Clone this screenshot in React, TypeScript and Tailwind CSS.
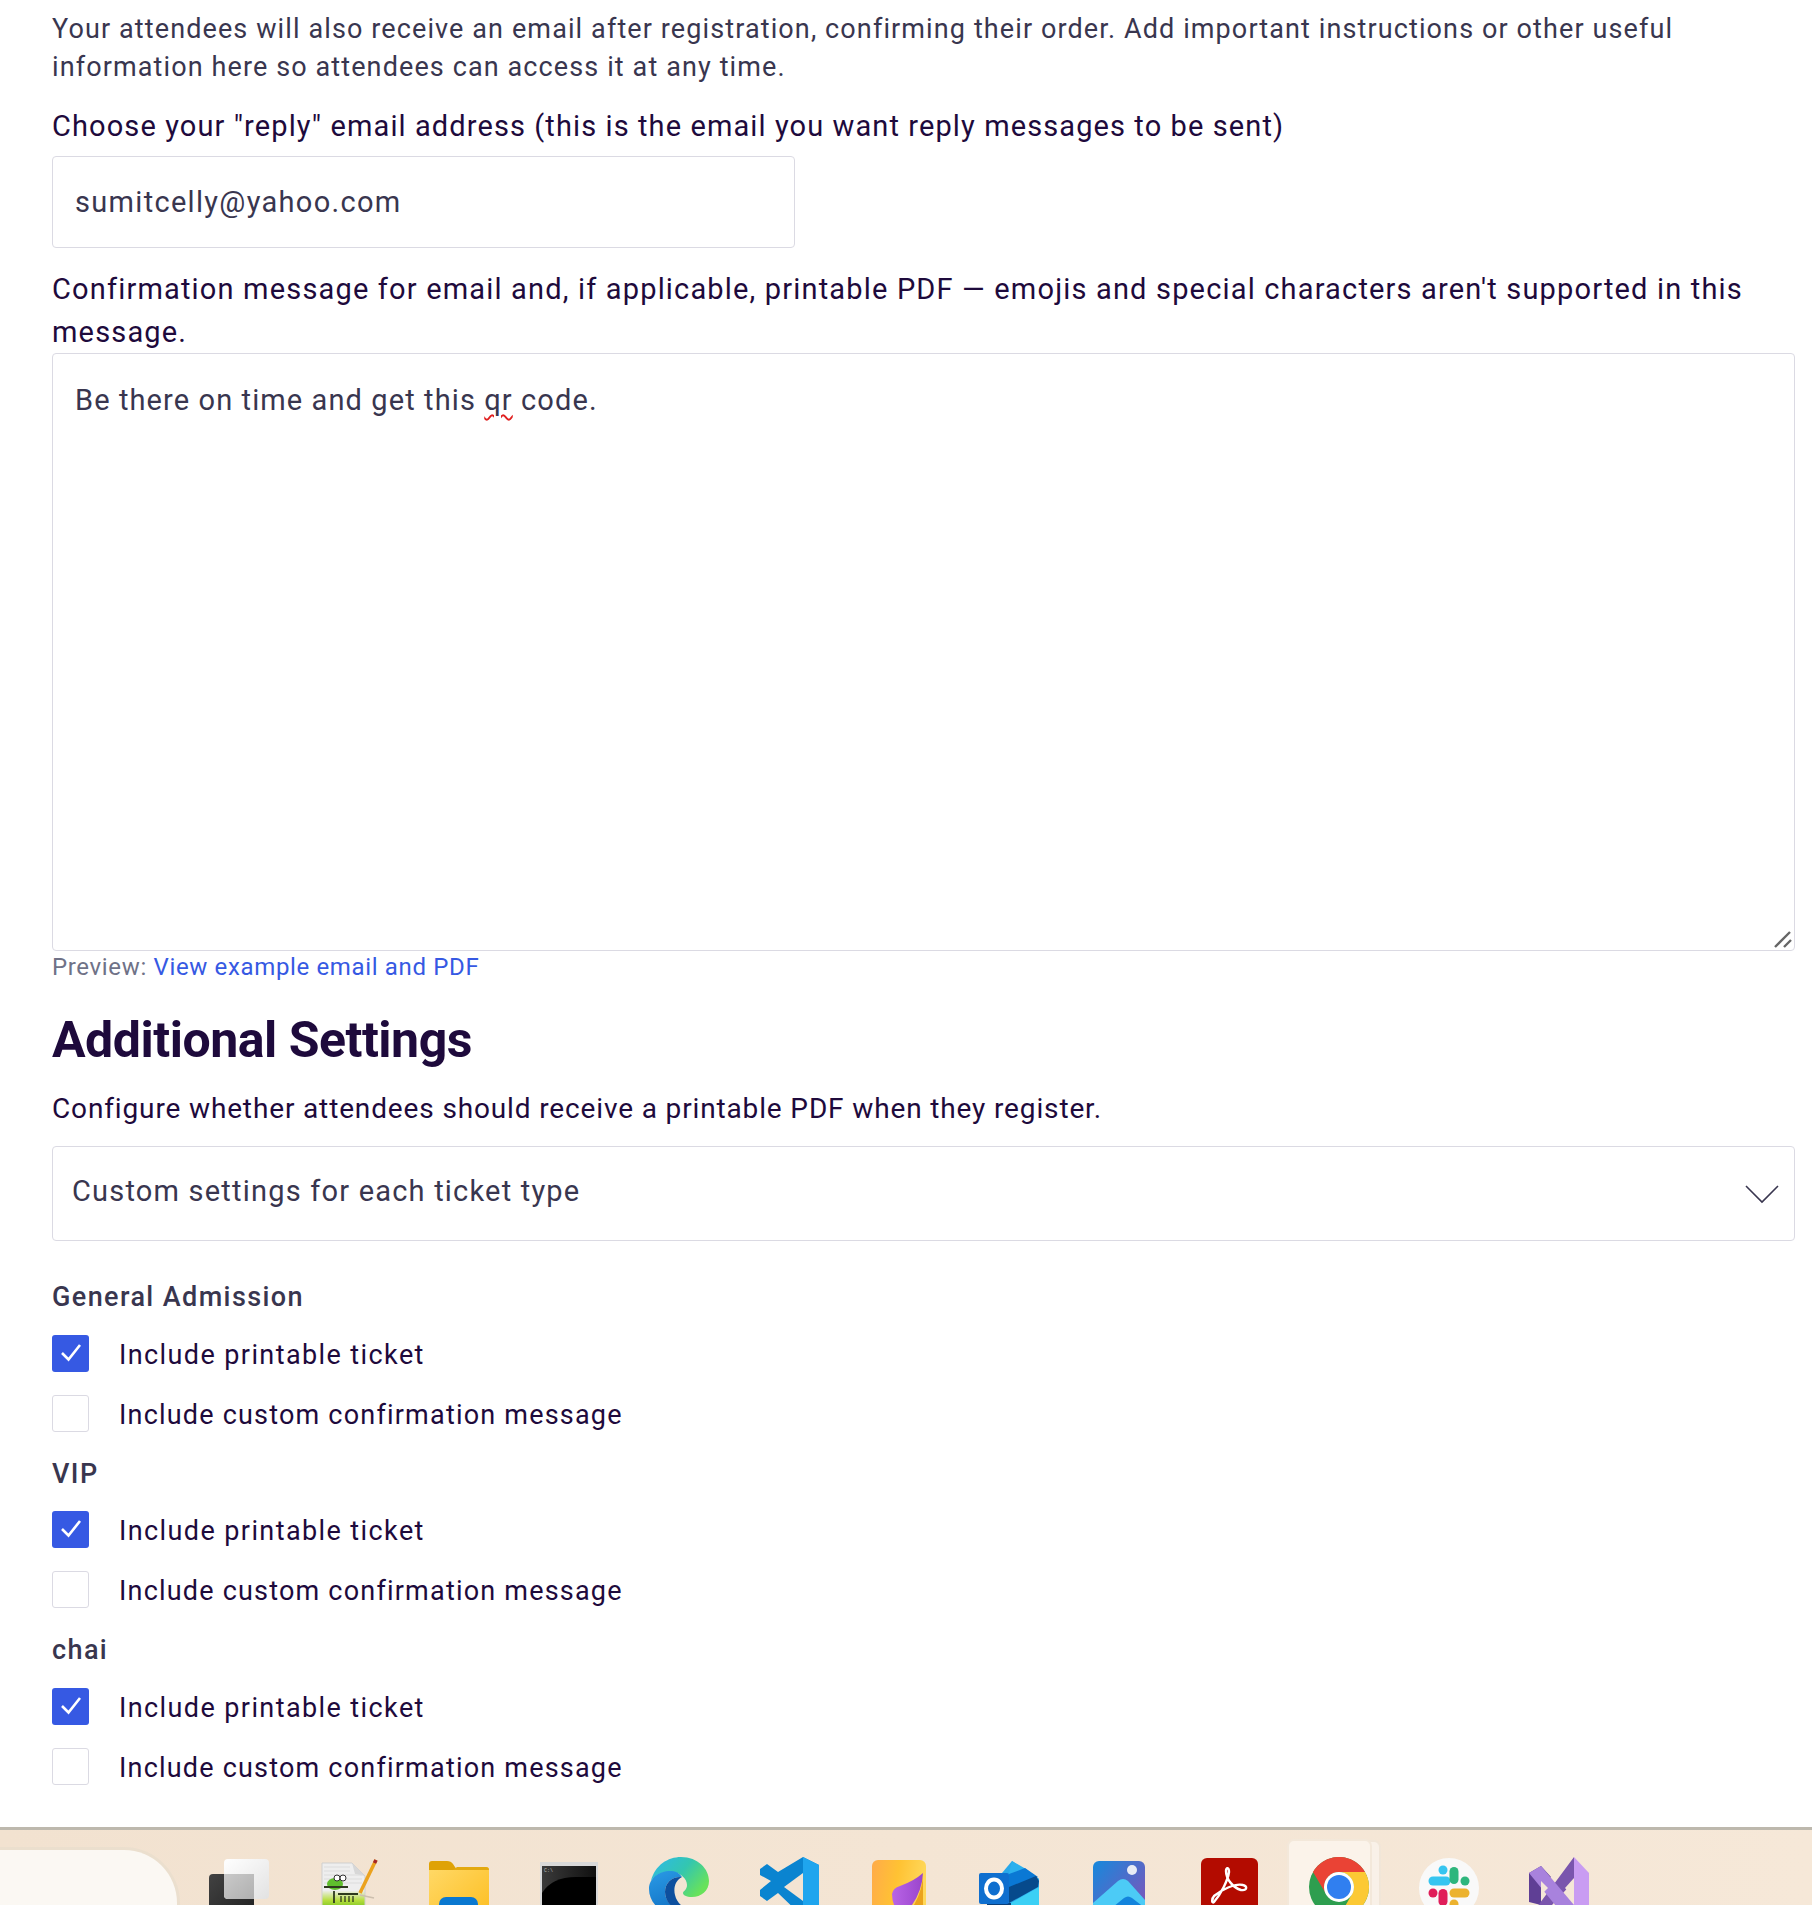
import React from "react";

const font = "font-['Roboto','Liberation_Sans',sans-serif]";

function Check({ on }: { on: boolean }) {
  return on ? (
    <span className="w-[37px] h-[37px] rounded-[3px] bg-[#3659e3] flex items-center justify-center shrink-0">
      <svg className="-mt-[3px]" width="24" height="24" viewBox="0 0 24 24" fill="none" stroke="#fff" strokeWidth="2.6">
        <path d="M3 13l6.500 6.500L21 5" />
      </svg>
    </span>
  ) : (
    <span className="w-[37px] h-[37px] rounded-[3px] border border-[#dbdae3] bg-white shrink-0" />
  );
}

function Row({ on, text }: { on: boolean; text: string }) {
  return (
    <div className={`h-[60px] flex items-start gap-[30px] text-[27px] leading-[40px] text-[#1e0a3c] ${on ? "tracking-[1.4px]" : "tracking-[1.2px]"}`}>
      <Check on={on} />
      <span>{text}</span>
    </div>
  );
}

function Group({ name }: { name: string }) {
  return (
    <section>
      <div className="h-[38px] leading-[38px] text-[27px] font-medium tracking-[1.4px] text-[#39364f] mb-[18.5px]">{name}</div>
      <Row on text="Include printable ticket" />
      <Row on={false} text="Include custom confirmation message" />
    </section>
  );
}

const Slot = ({ children, className = "" }: { children: React.ReactNode; className?: string }) => (
  <div className={`w-[110px] h-[75px] shrink-0 flex justify-center ${className}`}>{children}</div>
);

export default function App() {
  return (
    <div className={`h-[1905px] flex flex-col overflow-hidden bg-white ${font}`}>
      <main className="flex-1 min-h-0 pl-[52px] pr-[17px] pt-[10px]">
        <p className="text-[27px] leading-[38px] tracking-[1.11px] text-[#39364f]">
          Your attendees will also receive an email after registration, confirming their order. Add important instructions or other useful information here so attendees can access it at any time.
        </p>
        <label className="block mt-[21px] text-[29px] leading-[38px] tracking-[1.1px] text-[#1e0a3c]">
          Choose your "reply" email address (this is the email you want reply messages to be sent)
        </label>
        <div className="mt-[11px] w-[743px] h-[92px] border border-[#dbdae3] rounded-[4px] pl-[22px] pt-[2px] flex items-center text-[29px] tracking-[1.3px] text-[#39364f]">
          sumitcelly@yahoo.com
        </div>
        <label className="block mt-[20px] text-[29px] leading-[43px] tracking-[1.17px] text-[#1e0a3c]">
          Confirmation message for email and, if applicable, printable PDF — emojis and special characters aren't supported in this message.
        </label>
        <div className="relative -mt-[1px] h-[598px] border border-[#dbdae3] rounded-[4px] pl-[22px] pt-[25px] text-[29px] leading-[42px] tracking-[1.1px] text-[#39364f]">
          Be there on time and get this <span className="underline decoration-wavy decoration-[#e02020] decoration-[1.5px] underline-offset-4">qr</span> code.
          <svg className="absolute right-[1px] bottom-[1px]" width="20" height="20" viewBox="0 0 20 20" stroke="#666" strokeWidth="2.4" fill="none">
            <path d="M2 18L17 3M11 18l7-7" />
          </svg>
        </div>
        <p className="h-[32px] leading-[32px] text-[24px] tracking-[0.65px] text-[#6f7287]">
          Preview: <a className="text-[#3659e3]">View example email and PDF</a>
        </p>
        <h2 className="mt-[27px] h-[60px] leading-[60px] text-[50px] font-bold tracking-[-0.48px] text-[#1e0a3c]">Additional Settings</h2>
        <p className="mt-[20px] h-[38px] leading-[38px] text-[28px] tracking-[0.86px] text-[#1e0a3c]">
          Configure whether attendees should receive a printable PDF when they register.
        </p>
        <div className="mt-[18px] h-[95px] border border-[#dbdae3] rounded-[4px] pl-[19px] pr-[15px] flex items-center justify-between text-[29px] tracking-[1.2px] text-[#39364f]">
          <span className="-mt-[3px]">Custom settings for each ticket type</span>
          <svg width="34" height="20" viewBox="0 0 34 20" fill="none" stroke="#39364f" strokeWidth="1.6">
            <path d="M1 2l16 16L33 2" />
          </svg>
        </div>
        <div className="mt-[37px]">
          <Group name="General Admission" />
          <Group name="VIP" />
          <Group name="chai" />
        </div>
      </main>
      <footer className="h-[78px] shrink-0 overflow-hidden border-t-[3px] border-[#bdb8ad] bg-[linear-gradient(90deg,#f2e2d0,#f6e8d8)] flex items-start">
        <div className="mt-[17px] w-[180px] h-[70px] shrink-0 rounded-tr-[56px] bg-[#fbf8f3] border-[3px] border-l-0 border-[#ebdfce]" />
        <div className="ml-[4px] flex items-start">
          <Slot>
            <svg className="mt-[29px]" width="60" height="60" viewBox="0 0 60 60">
              <defs>
                <linearGradient id="tw" x1="0" y1="0" x2="1" y2="1">
                  <stop offset="0" stopColor="#ffffff" />
                  <stop offset="1" stopColor="#e2e2e2" />
                </linearGradient>
                <linearGradient id="tv" x1="0" y1="0" x2="1" y2="1">
                  <stop offset="0" stopColor="#c9c9c9" />
                  <stop offset="1" stopColor="#b0b0b0" />
                </linearGradient>
                <linearGradient id="td" x1="0" y1="0" x2="1" y2="1">
                  <stop offset="0" stopColor="#424242" />
                  <stop offset="1" stopColor="#1f1f1f" />
                </linearGradient>
              </defs>
              <rect x="0" y="15" width="45" height="45" rx="4" fill="url(#td)" />
              <rect x="15" y="0" width="45" height="40" rx="4" fill="url(#tw)" />
              <path d="M15 15h30v25H19q-4 0-4-4z" fill="url(#tv)" />
            </svg>
          </Slot>
          <Slot>
            <svg className="mt-[28px]" width="60" height="60" viewBox="0 0 60 60">
              <defs>
                <linearGradient id="np" x1="0" y1="0" x2="0" y2="1">
                  <stop offset="0.5" stopColor="#eeeeee" />
                  <stop offset="0.68" stopColor="#b5de3c" />
                  <stop offset="0.85" stopColor="#6fbe1e" />
                </linearGradient>
              </defs>
              <path d="M3 5h30l13 13v42H3z" fill="url(#np)" stroke="#cfcfcf" />
              <path d="M33 5l3 11 10 2z" fill="#d7d7d7" />
              <path d="M5 9h26M5 13h26M5 17h38M5 21h38M5 25h38" stroke="#dcdcdc" />
              <path d="M57 2L41 35" stroke="#eba21e" strokeWidth="3.500" />
              <path d="M57 2l-1.500 3" stroke="#a5262b" strokeWidth="3.500" />
              <path d="M41 37l14 3" stroke="#cdbfae" strokeWidth="1.500" />
              <ellipse cx="16" cy="26" rx="8" ry="6" fill="#5fbf2d" />
              <circle cx="18" cy="20" r="3" fill="#fff" stroke="#333" />
              <circle cx="24" cy="20" r="3" fill="#fff" stroke="#333" />
              <path d="M5 29h24M15 33v12M19 36h20" stroke="#2e3a1e" strokeWidth="1.800" fill="none" />
              <path d="M22 38v6M26 38v6M30 38v6M34 38v6" stroke="#2e3a1e" strokeWidth="1.300" />
            </svg>
          </Slot>
          <Slot>
            <svg className="mt-[31px]" width="60" height="60" viewBox="0 0 60 60">
              <defs>
                <linearGradient id="fo" x1="0" y1="0" x2="1" y2="1">
                  <stop offset="0" stopColor="#ffd968" />
                  <stop offset="1" stopColor="#fdbd1e" />
                </linearGradient>
              </defs>
              <path d="M0 3q0-3 3-3h15q4 0 6 3l4 6H0z" fill="#dfa206" />
              <path d="M0 9h26l4-3h27q3 0 3 3v48q0 3-3 3H3q-3 0-3-3z" fill="url(#fo)" />
              <path d="M28 6h29q3 0 3 3H24z" fill="#e3a90f" />
              <rect x="10" y="36" width="39" height="30" rx="7" fill="#0a78d0" />
            </svg>
          </Slot>
          <Slot>
            <svg className="mt-[32px]" width="58" height="60" viewBox="0 0 58 60">
              <defs>
                <linearGradient id="tm" x1="0" y1="0" x2="1" y2="0">
                  <stop offset="0" stopColor="#3a3a3a" />
                  <stop offset="1" stopColor="#101010" />
                </linearGradient>
              </defs>
              <rect width="58" height="60" fill="#d9d9d9" />
              <rect x="2" y="4" width="54" height="56" fill="url(#tm)" />
              <path d="M2 31q10-16 34-16h20v45H2z" fill="#000" />
              <text x="4" y="10" fontSize="5" fill="#bbb" fontFamily="'Liberation Mono',monospace">C:\</text>
            </svg>
          </Slot>
          <Slot>
            <svg className="mt-[27px]" width="60" height="60" viewBox="0 0 60 60">
              <defs>
                <linearGradient id="eg" x1="0" y1="0" x2="1" y2="0.6">
                  <stop offset="0" stopColor="#2db9ec" />
                  <stop offset="0.55" stopColor="#33c6b0" />
                  <stop offset="1" stopColor="#68e25a" />
                </linearGradient>
                <linearGradient id="eb" x1="0" y1="0" x2="0.5" y2="1">
                  <stop offset="0" stopColor="#2a9be6" />
                  <stop offset="1" stopColor="#0f6cc0" />
                </linearGradient>
              </defs>
              <path d="M2 24C6 8 19 0 32 0c17 0 28 12 28 24 0 10-8 16-17 16-6 0-9-2-9-4 0-2 4-3 4-8 0-6-6-12-14-13C14 14 6 18 2 24z" fill="url(#eg)" />
              <path d="M0 32C0 20 12 13 23 14c5 .5 8 3 10 6-9-1-17 5-17 15 0 11 11 20 24 20 6 0 14-3 16-6-4 8-14 11-21 11C16 60 0 48 0 32z" fill="url(#eb)" />
              <path d="M16 35c0-10 8-16 17-15-6 3-9 10-7 18 2 9 10 14 18 17-14 3-28-7-28-20z" fill="#0d4f9e" />
            </svg>
          </Slot>
          <Slot>
            <svg className="mt-[27px]" width="60" height="60" viewBox="0 0 60 60">
              <path d="M44 0l16 8v44l-16 8-25-24-11 8-7-5v-6l11-9L1 18v-6l7-5 11 8z" fill="#0a84d0" />
              <path d="M44 0l16 8v44l-16 8z" fill="#1fa5ee" />
              <path d="M44 16L25 30l19 14z" fill="#f3e4d3" />
            </svg>
          </Slot>
          <Slot>
            <svg className="mt-[30px]" width="54" height="60" viewBox="0 0 54 60">
              <defs>
                <linearGradient id="st" x1="0" y1="0" x2="1" y2="0.2">
                  <stop offset="0" stopColor="#ffab4a" />
                  <stop offset="0.5" stopColor="#ffc233" />
                  <stop offset="1" stopColor="#ffd85a" />
                </linearGradient>
                <linearGradient id="sp" x1="0" y1="0" x2="1" y2="0">
                  <stop offset="0" stopColor="#b964e6" />
                  <stop offset="1" stopColor="#9a45cc" />
                </linearGradient>
              </defs>
              <rect width="54" height="60" rx="6" fill="url(#st)" />
              <path d="M51 13q0 20-14 40l14-8z" fill="#eba31c" />
              <path d="M20 34q1-6 8-8 14-5 23-13-1 18-11 32l-4 4-9 4q-7-8-7-19z" fill="url(#sp)" />
            </svg>
          </Slot>
          <Slot>
            <svg className="mt-[31px]" width="60" height="60" viewBox="0 0 60 60">
              <path d="M33 0l27 18v42H8V30z" fill="#28a8ea" />
              <path d="M30 12L33 0l14 8 13 10-30 14z" fill="#2bb0ee" />
              <path d="M30 13l16-6 13 9-29 16z" fill="#0a78d4" />
              <path d="M30 26l27-11 3 5-1 6-29 16z" fill="#064a8c" />
              <path d="M30 43l30-17v34H30z" fill="#3cd0f5" />
              <rect x="8" y="42" width="24" height="18" fill="#0a3f7a" />
              <rect y="12" width="30" height="31" rx="2" fill="#0f6fcf" />
              <ellipse cx="15" cy="27.500" rx="8" ry="9" fill="none" stroke="#fff" strokeWidth="4" />
            </svg>
          </Slot>
          <Slot>
            <svg className="mt-[31px]" width="52" height="60" viewBox="0 0 52 60">
              <defs>
                <linearGradient id="ph" x1="0" y1="0" x2="1" y2="0.9">
                  <stop offset="0" stopColor="#1689dc" />
                  <stop offset="1" stopColor="#8451b8" />
                </linearGradient>
              </defs>
              <rect width="52" height="60" rx="6" fill="url(#ph)" />
              <circle cx="39" cy="9" r="5" fill="#e8ecf5" />
              <path d="M0 42L25 20q5-4 10 0l17 19v21H0z" fill="#4ccbf6" />
              <path d="M20 46l11-9q4-3 8 0l13 10v13H20z" fill="#1384dc" />
            </svg>
          </Slot>
          <Slot>
            <svg className="mt-[28px]" width="57" height="60" viewBox="0 0 57 60">
              <rect width="57" height="60" rx="6" fill="#b30b00" />
              <path d="M13 44C20 36 27 22 28 14C28 9 25 9 25 13C25 22 33 30 40 32C46 33 47 28 42 27C34 25 20 32 13 38C10 41 11 46 13 44Z"
                fill="none" stroke="#fff" strokeWidth="2.400" strokeLinejoin="round" />
            </svg>
          </Slot>
          <Slot className="relative">
            <div className="absolute top-[10px] left-[3px] w-[94px] h-[90px] rounded-t-[7px] bg-[#f9f1e8] border-[2px] border-[#f1e6d8]" />
            <div className="absolute top-[9px] left-[3px] w-[85px] h-[90px] rounded-t-[7px] bg-[#fbf3ea] border-[2px] border-[#f3e8da]" />
            <svg className="relative mt-[27px]" width="60" height="60" viewBox="0 0 60 60">
              <circle cx="30" cy="30" r="30" fill="#2e9e4f" />
              <path d="M56 15A30 30 0 0 0 4 15L17 37A15 15 0 0 1 30 15Z" fill="#ea4335" />
              <path d="M56 15A30 30 0 0 1 30 60L43 37A15 15 0 0 0 30 15Z" fill="#fcc934" />
              <circle cx="30" cy="30" r="15" fill="#fff" />
              <circle cx="30" cy="30" r="12" fill="#307ff0" />
            </svg>
          </Slot>
          <Slot>
            <svg className="mt-[28px]" width="60" height="60" viewBox="0 0 60 60">
              <circle cx="30" cy="30" r="30" fill="#f9f9f9" />
              <g strokeLinecap="round" fill="none" strokeWidth="9">
                <path d="M24 12v.1" stroke="#36c5f0" />
                <path d="M14 23h13" stroke="#36c5f0" />
                <path d="M35 13.500v8" stroke="#2eb67d" />
                <path d="M46 23v.1" stroke="#2eb67d" />
                <path d="M14 35v.1" stroke="#e01e5a" />
                <path d="M24 35.500v8" stroke="#e01e5a" />
                <path d="M35 35h11" stroke="#ecb22e" />
                <path d="M35 46v.1" stroke="#ecb22e" />
              </g>
            </svg>
          </Slot>
          <Slot>
            <svg className="mt-[27px]" width="60" height="60" viewBox="0 0 60 60">
              <path d="M0 16l12-7 10 11-10 10v18L0 45z" fill="#5f3f95" />
              <path d="M45 0v24L12 60H0l8-10z" fill="#7a55ad" />
              <path d="M12 9l33 39v12h-9L0 16z" fill="#a882dd" />
              <path d="M45 0l15 16v44H45z" fill="#c99cf2" />
              <path d="M12 24v14l7-7z" fill="#f5e7d7" />
              <path d="M45 21l-9 10 9 10z" fill="#f5e7d7" />
            </svg>
          </Slot>
        </div>
      </footer>
    </div>
  );
}
